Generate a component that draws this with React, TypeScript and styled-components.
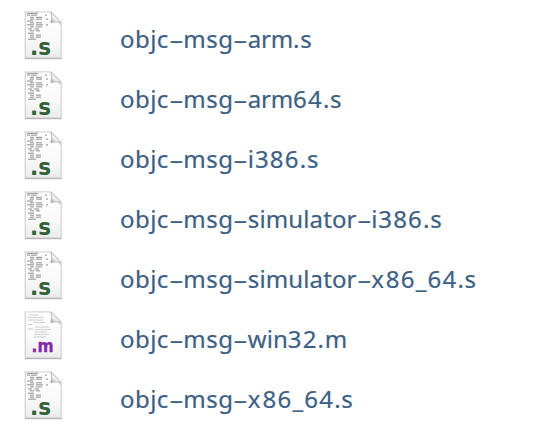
import React from "react";
import styled, { createGlobalStyle } from "styled-components";

const GlobalStyle = createGlobalStyle`
  body { margin: 0; background: #fff; overflow: hidden; }
`;

const FileList = styled.ul`
  list-style: none;
  margin: 0;
  padding: 5px 0 0 19px;
  height: 432px;
  box-sizing: border-box;
  overflow: hidden;
`;

const FileRow = styled.li`
  display: flex;
  align-items: flex-start;
  gap: 53px;
  height: 60px;
`;

const FileIcon = styled.svg`
  width: 48px;
  height: 60px;
  flex: none;
`;

const FileLink = styled.a`
  padding-top: 4px;
  color: #3d6084;
  font: 24px/60px "Noto Sans", sans-serif;
  -webkit-text-stroke: 0.2px #3d6084;
  white-space: nowrap;
`;

const Run = styled.span<{ $spacing: number }>`
  letter-spacing: ${(p) => p.$spacing}px;
`;

const Hyphen = styled.span`
  display: inline-block;
  width: 14.5px;
  text-align: center;
  transform: scaleX(1.9);
`;

type Kind = "s" | "m";

const codeLines: [number, number, number][] = [
  [8, 8.4, 11], [8, 10.2, 3], [12, 10.2, 6], [26, 10.2, 2], [11, 12.4, 4], [17, 12.4, 6],
  [11, 14.2, 4], [17, 14.2, 6], [27, 14.2, 2], [8, 16, 6], [11, 17.8, 4],
  [17, 17.8, 6], [8, 19.8, 7], [17, 19.8, 7], [27, 19.8, 2], [11, 21.8, 4], [17, 21.8, 6],
  [9, 24, 4], [15, 24, 5], [11, 25.8, 4], [17, 25.8, 4], [9, 28.2, 6],
  [11, 30.2, 4], [17, 30.2, 5], [11, 32.2, 4], [17, 32.2, 5], [9, 34.2, 8],
];

const proseLines: [number, number, number][] = [
  [9, 10, 11], [9, 12.5, 16], [9, 15, 15], [15, 17.5, 11], [9, 19.5, 4], [16, 22, 14],
  [9, 24, 5], [16, 24.5, 16], [16, 27, 12], [15, 29.5, 15], [15, 32, 12],
];

function DocumentIcon({ kind, id }: { kind: Kind; id: string }) {
  const lines = kind === "s" ? codeLines : proseLines;
  return (
    <FileIcon viewBox="0 0 48 60" aria-hidden="true">
      <defs>
        <linearGradient id={`${id}-page`} x1="0" y1="0" x2="0" y2="1">
          <stop offset="0" stopColor="#fff" />
          <stop offset=".6" stopColor="#fafafa" />
          <stop offset="1" stopColor="#ebebeb" />
        </linearGradient>
        <linearGradient id={`${id}-fold`} x1="0" y1="1" x2=".7" y2=".3">
          <stop offset="0" stopColor="#999" />
          <stop offset=".5" stopColor="#efefef" />
          <stop offset="1" stopColor="#fff" />
        </linearGradient>
      </defs>
      <path d="M5.9 6.9H32L42.5 18V53.9H5.9Z" fill="none" stroke="#000" strokeOpacity=".06" strokeWidth="2" />
      <path d="M6.5 7H32L42 17.5V53.3H6.5Z" fill={`url(#${id}-page)`} stroke="#cbcbcb" strokeWidth=".8" />
      <path d="M6.2 53.3H42.3" stroke="#aaa" strokeWidth=".9" />
      {lines.map(([x, y, w], i) => (
        <path key={i} d={`M${x} ${y}h${w}`} stroke={kind === "s" ? "#a0a0a0" : "#d4d4d4"} strokeWidth="1.2" />
      ))}
      <path d="M31 10L40 19L41.6 20V17.8Z" fill="#000" opacity=".12" />
      <path d="M32 7Q33.4 12 31.8 17.5Q37 16 42 17.5Z" fill={`url(#${id}-fold)`} stroke="#a8a8a8" strokeWidth=".7" />
      {kind === "s" ? (
        <text x="11" y="49.6" fontFamily="DejaVu Sans, sans-serif" fontWeight="700" fontSize="23" textLength="21" lengthAdjust="spacingAndGlyphs" fill="#2f6038">.s</text>
      ) : (
        <text x="12.6" y="46.8" fontFamily="DejaVu Sans, sans-serif" fontWeight="700" fontSize="17.5" textLength="22" lengthAdjust="spacingAndGlyphs" fill="#8228a8" stroke="#8228a8" strokeWidth=".3">.m</text>
      )}
    </FileIcon>
  );
}

const files: { name: string; kind: Kind }[] = [
  { name: "objc-msg-arm.s", kind: "s" },
  { name: "objc-msg-arm64.s", kind: "s" },
  { name: "objc-msg-i386.s", kind: "s" },
  { name: "objc-msg-simulator-i386.s", kind: "s" },
  { name: "objc-msg-simulator-x86_64.s", kind: "s" },
  { name: "objc-msg-win32.m", kind: "m" },
  { name: "objc-msg-x86_64.s", kind: "s" },
];

function tracking(run: string) {
  if (run === "x") return 2;
  if (run === "objc" || run === "msg") return 0.45;
  if (run === "i") return 0.9;
  if (run === ".") return 0.7;
  if (run === "simulator") return 0.12;
  if (run === "arm") return -0.2;
  return /\d|_/.test(run) ? 1.2 : 0;
}

function FileName({ name }: { name: string }) {
  const runs = name.match(/-|[a-z]+|[\d_]+|\./g) ?? [];
  return (
    <FileLink>
      {runs.map((run, i) =>
        run === "-" ? (
          <Hyphen key={i}>-</Hyphen>
        ) : (
          <Run key={i} $spacing={tracking(run)}>{run}</Run>
        ),
      )}
    </FileLink>
  );
}

export default function App() {
  return (
    <>
      <GlobalStyle />
      <FileList>
        {files.map((file, i) => (
          <FileRow key={file.name}>
            <DocumentIcon kind={file.kind} id={`doc${i}`} />
            <FileName name={file.name} />
          </FileRow>
        ))}
      </FileList>
    </>
  );
}
